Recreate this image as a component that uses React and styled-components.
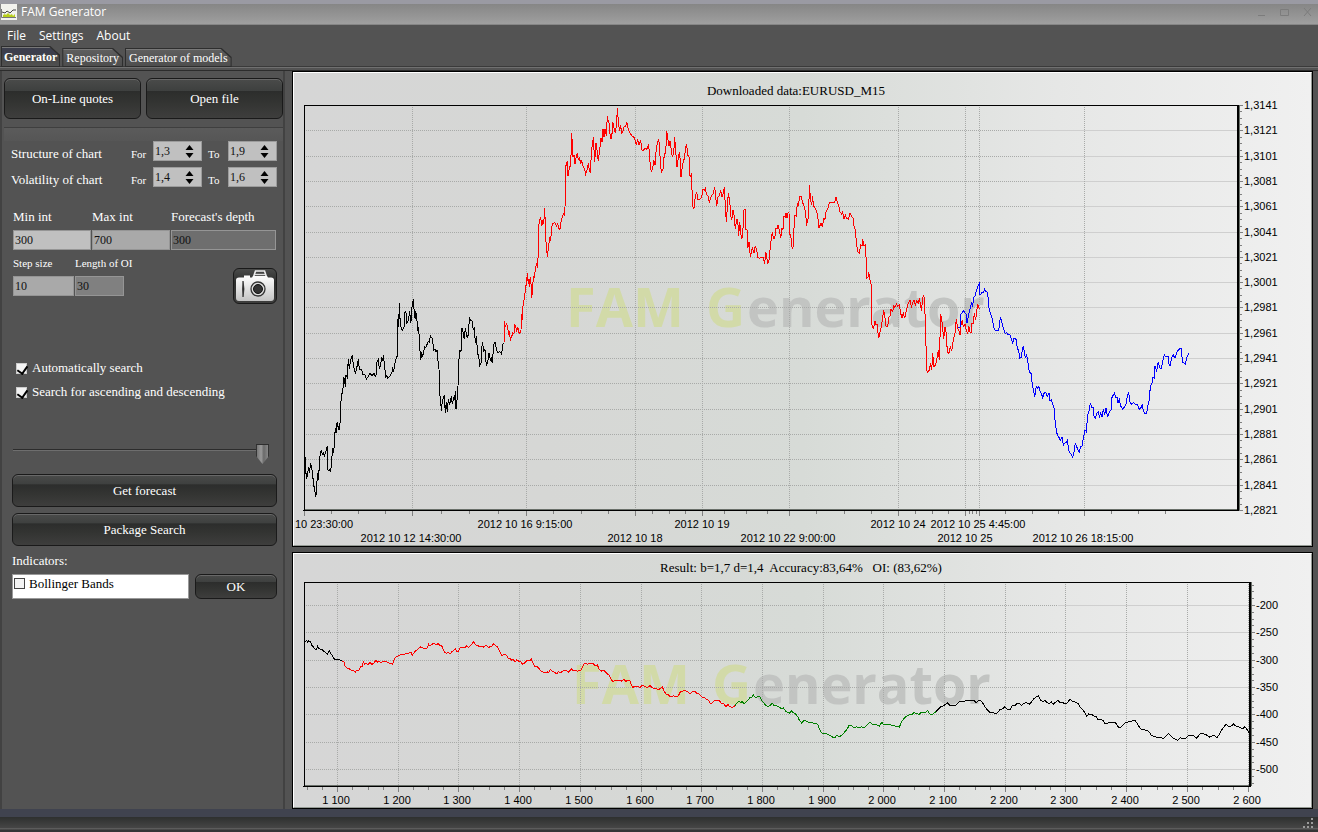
import React, {useState} from 'react'
import styled, {createGlobalStyle} from 'styled-components'

// samples are stored in thirds of a chart unit, counted from the origin of each run
const priceRuns = [
    {color: "#000", x: 290, y: 280, data: "45,530 47,575 50,592 53,585 55,560 58,580 62,548 65,570 68,572 70,618 73,618 77,652 80,630 82,580 85,600 88,560 91,515 94,512 97,522 100,518 103,528 106,518 109,510 112,497 113,570 117,572 119,568 122,574 125,540 128,505 131,520 134,470 136,445 138,460 140,430 143,428 145,450 148,448 151,420 154,342 158,340 161,290 164,300 166,322 168,285 172,292 175,236 178,268 181,245 187,224 190,255 196,280 200,265 205,238 208,268 215,268 219,285 224,283 229,297 234,290 240,280 246,287 252,280 256,288 259,284 261,245 265,238 268,265 271,260 275,230 278,242 280,224 284,262 287,290 290,287 293,295 300,288 306,275 308,262 311,275 314,252 320,230 323,228 324,118 326,140 328,68 331,135 337,152 343,138 345,95 348,98 351,130 355,122 359,92 362,130 364,118 366,80 370,58 373,100 376,118 377,92 381,122 384,152 386,140 388,185 392,240 395,222 398,228 404,200 408,202 414,185 418,186 421,168 427,175 431,210 435,207 438,215 441,210 443,235 447,268 449,340 452,362 454,392 457,362 460,355 463,345 466,400 469,365 472,396 475,358 479,375 484,348 487,372 491,355 494,358 496,332 498,388 501,360 504,318 506,245 510,210 513,215 516,145 520,160 523,178 526,145 530,165 532,175 536,158 538,110 542,122 546,122 550,150 553,140 556,190 559,168 563,222 566,228 569,257 573,250 577,185 581,212 585,208 589,258 593,248 597,218 601,240 604,235 607,248 611,195 615,185 620,210 624,218 630,215 635,222 638,192 641,190"},
    {color: "#f00", x: 500, y: 90, data: "12,760 13,693 16,710 20,702 23,712 26,735 28,722 31,750 35,740 38,728 42,730 44,705 47,708 50,725 53,710 57,728 60,730 63,720 65,672 67,690 70,632 74,628 76,590 79,585 82,550 85,582 87,568 89,590 92,560 95,625 98,595 100,560 103,562 107,530 110,520 113,535 115,480 116,405 119,392 122,380 125,408 128,395 131,402 134,355 138,455 142,500 146,465 149,445 152,452 155,410 159,400 165,398 169,408 173,402 177,418 181,415 184,390 188,378 192,370 194,378 195,350 197,230 202,212 204,258 208,235 212,225 215,128 219,200 222,195 225,222 229,198 232,188 235,210 238,200 242,222 245,212 249,228 253,235 257,253 261,240 265,220 268,240 272,250 274,175 277,170 280,142 284,215 288,160 291,180 295,213 299,180 303,145 306,155 309,118 312,140 315,118 319,137 322,78 325,95 328,100 331,145 335,147 338,95 342,115 346,128 350,100 352,55 356,105 359,122 362,105 365,132 369,122 373,108 377,110 380,95 385,118 390,128 396,138 402,142 406,152 409,165 413,148 417,165 422,150 425,178 429,183 434,175 440,178 446,163 449,208 454,246 458,235 461,210 465,225 469,175 475,150 478,158 481,215 484,246 490,235 493,190 497,192 500,122 504,150 507,168 510,152 514,180 517,200 521,190 524,142 528,195 531,230 536,195 539,185 543,262 547,232 551,208 554,210 556,172 560,165 563,195 567,200 569,255 573,262 575,250 577,345 580,355 583,353 586,318 590,308 594,330 600,328 605,322 608,298 613,300 616,295 620,315 624,318 628,338 634,318 640,310 644,292 647,320 650,348 654,320 658,318 662,300 666,322 670,308 673,292 676,345 679,397 682,355 685,310 689,330 692,375 695,390 699,360 703,380 706,418 710,388 713,390 716,438 719,395 724,445 728,440 731,360 735,358 738,420 741,418 743,475 747,455 751,500 757,475 762,488 766,468"},
    {color: "#f00", x: 740, y: 170, data: "46,228 50,238 53,262 58,265 64,262 70,262 74,283 77,245 80,262 83,280 86,278 90,240 94,205 97,185 100,205 104,205 108,175 111,178 114,165 118,180 122,205 126,175 129,178 132,138 136,142 138,130 141,145 144,128 147,128 148,192 152,195 157,238 160,228 162,175 165,135 169,138 172,100 175,105 179,80 184,80 188,98 192,108 196,125 200,162 203,155 206,130 208,45 212,90 215,105 218,78 220,108 224,112 230,125 235,150 237,175 243,158 247,172 251,145 255,148 258,125 263,118 268,98 276,96 284,98 288,82 292,95 296,108 300,125 305,132 308,125 311,148 316,135 320,145 325,148 330,130 335,140 340,145 341,165 346,180 349,215 353,245 358,250 362,225 366,228 368,208 372,228 376,225 378,260 380,325 384,320 386,305 390,330 394,345 396,465 400,478 405,452 408,465 411,462 416,505 420,485 424,470 427,450 431,420 434,435 438,468 443,470 447,440 450,438 453,418 458,425 461,408 465,412 469,402 473,408 478,405 482,430 486,445 490,430 494,445 497,430 501,415 505,400 510,390 514,410 518,398 522,390 526,405 530,392 535,400 538,388 541,398 544,422 547,400 550,375 553,385 556,450 560,600 562,608 568,600 572,580 575,600 578,550 582,590 587,585 591,565 595,540 598,570 602,432 606,455 611,508 615,470 619,490 622,545 627,550 631,530 635,542 640,510 645,490 649,448 653,475 658,485 660,495 663,465 667,450 670,470 675,462 679,480 683,492 686,468 690,485 693,490 696,460 700,460 703,430 707,450 710,425 713,403 718,418"},
    {color: "#00f", x: 940, y: 270, data: "55,173 60,172 61,135 66,130 70,122 75,128 78,132 81,158 85,140 89,120 92,112 94,98 98,108 101,82 105,78 109,62 114,48 118,40 120,75 126,68 130,68 134,57 138,65 141,65 144,80 146,112 150,125 156,145 160,162 163,178 168,182 173,182 176,180 180,150 182,142 186,160 190,175 195,190 200,188 205,195 209,192 213,205 218,218 222,205 228,208 232,235 236,242 239,265 244,262 247,240 250,228 253,245 256,262 260,255 264,280 268,305 273,310 276,335 280,360 284,380 289,350 293,355 297,350 300,362 304,370 308,383 313,368 318,368 322,380 327,370 329,392 334,390 338,402 343,418 345,450 348,475 352,495 356,500 361,512 366,502 370,525 374,520 378,518 382,512 385,530 388,548 394,552 398,562 402,545 406,518 410,530 414,540 418,545 422,530 426,528 430,505 435,480 439,485 443,435 448,420 451,398 455,412 460,412 462,438 466,445 471,430 475,425 478,440 482,428 486,440 490,420 494,432 498,415 503,442 508,425 513,420 515,385 518,378 523,370 527,382 531,382 534,400 538,388 542,408 548,417 554,410 558,402 562,378 566,368 570,395 574,403 580,398 586,402 592,402 597,418 602,415 607,402 610,422 615,432 620,430 624,405 628,390 631,350 636,340 639,322 643,325 645,288 650,302 655,275 658,290 663,298 668,275 673,255 678,260 684,258 686,280 690,288 695,262 700,255 705,265 710,248 715,240 722,234 725,240 727,278 732,278 736,283 740,262 743,258 746,248"},
]

const resultRuns = [
    {color: "#000", x: 290, y: 550, data: "45,276 50,272 53,278 56,273 62,276 65,285 70,290 75,297 80,298 83,289 87,296 95,298 100,303 105,305 112,313 118,303 122,310 128,318 132,326 137,330 143,328 150,330 155,333"},
    {color: "#f00", x: 290, y: 550, data: "155,333 162,335 165,347 170,354 178,356 185,362 190,362 196,367 200,361 206,361 212,350 217,349 220,336 224,342 228,339 234,344 240,338 246,343 252,339 258,330 263,337 268,334 273,340 278,334 285,335 292,336 300,340 308,343 312,330 318,320 325,318 332,313 340,314 348,310 356,310 362,306 367,315 372,308 378,302 385,296 392,290 400,295 406,294 411,295 416,283 420,289 426,283 432,280 437,284 445,281 450,288 455,287 460,300 465,308 470,310 475,307 480,313 485,305 490,303 496,296 500,303 505,303 510,294 518,292 525,294 530,287 535,292 541,288 547,280 552,275 556,284 562,286 570,291 575,288 580,292 588,285 595,292 602,290 607,288 611,280 616,287 622,289 626,298 632,310 637,318 643,312 650,317 655,326 660,325 665,330 670,328 675,336 680,330 687,334 692,335 698,343 705,338 712,330 720,332 724,328 728,338 735,350 742,350 748,356 753,364 760,367 767,368 772,365 776,369 781,358 787,363 795,368 801,371 805,365 812,368 820,362 828,360 834,367 840,362 845,357 850,362 858,360 862,364 868,362 873,360 880,345 885,340 892,343 900,339 908,340 915,347 922,345 928,358 935,364 942,361 950,370 957,375 963,388 970,395 976,390 983,393 990,390 996,394 1002,388 1008,394 1014,390 1020,393"},
    {color: "#f00", x: 630, y: 550, data: "0,393 3,402 8,412 16,409 25,410 30,412 38,405 45,410 52,412 60,407 68,414 76,414 85,419 92,415 97,411 103,424 108,432 113,432 118,438 125,441 130,437 136,439 145,438 150,427 156,424 164,422 172,424 180,431 187,426 195,423 200,430 208,432 215,441 222,442 228,448 235,450 240,460 246,459 252,452 260,450 268,452 275,461 282,462 288,470 294,464 300,470 308,472 315,467"},
    {color: "#008000", x: 630, y: 550, data: "315,467 320,460 326,455 332,457 337,455 342,462 348,455 355,450 360,442 365,443 370,435 376,443 383,440 390,440 396,452 402,460 408,466 414,470 420,466 427,460 433,467 440,468 447,471 453,475 460,474 466,482 472,487 478,490 485,483 490,488 497,492 503,500 508,510 515,519 521,512 528,513 535,517 543,516 550,519 557,519 564,525 568,538 575,548 582,552 590,551 598,555 605,560 614,564 620,556 628,560 636,555 645,545 651,538 658,525 665,528 672,533 680,530 687,533 695,530 702,533 709,528 715,522 720,517 726,522 733,522 740,524 748,528 755,517 760,522 767,525 775,523 783,525 790,526 800,530 808,531 815,515 822,505 830,498 838,494 846,494 852,488 860,490 867,494 874,487 880,488 887,487 893,482 898,490 904,495 912,490 917,485"},
    {color: "#000", x: 630, y: 550, data: "917,485 925,478 932,470 940,468 945,464 952,458 958,465 966,468 975,467 982,462 988,454 995,453 1002,455 1010,450 1014,452"},
    {color: "#000", x: 968, y: 550, data: "0,452 12,450 18,452 25,458 32,451 40,453 46,462 52,472 58,480 66,488 74,487 83,492 90,486 97,478 103,477 110,470 118,478 126,480 132,468 140,467 148,460 155,461 161,466 168,460 175,458 184,463 190,457 197,447 205,440 211,437 217,450 225,454 232,452 238,458 244,461 250,456 256,463 263,456 270,451 277,458 284,458 292,461 300,457 306,447 313,453 322,457 330,460 336,470 343,478 350,487 356,499 362,492 370,493 378,498 385,500 390,510 398,509 405,511 412,522 420,519 428,517 436,519 442,517 447,525 453,534 460,530 467,522 475,517 484,515 492,513 500,510 507,520 515,533 522,539 530,540 538,541 545,548 551,557 558,559 565,562 575,561 585,566 593,560 601,550 608,558 615,564 622,568 630,571 637,563 645,567 653,566 660,558 670,556 678,558 686,565 693,555 700,550 710,553 718,556 725,562 733,557 740,558 747,563 753,555 760,542 768,530 774,523 782,530 790,528 797,522 803,528 810,530 818,534 824,536 831,530 838,540 842,548 846,552"},
]

const priceChart = {
    id: "price",
    view: [294, 73, 1017, 472],
    plot: {left: 304, top: 105, right: 1238, bottom: 510},
    title: {text: "Downloaded data:EURUSD_M15", x: 796, y: 95},
    mark: {x: 566, y: 327},
    solidFrom: 1030,
    yTicks: ["1,3141", "1,3121", "1,3101", "1,3081", "1,3061", "1,3041", "1,3021", "1,3001", "1,2981", "1,2961", "1,2941", "1,2921", "1,2901", "1,2881", "1,2861", "1,2841", "1,2821"]
        .map((label, i) => ({label, at: Math.round(105 + i * 25.3)})),
    xTicks: [
        {at: 304, label: "10 23:30:00", x: 324, row: 0},
        {at: 412, label: "2012 10 12 14:30:00", x: 411, row: 1},
        {at: 526, label: "2012 10 16 9:15:00", x: 525, row: 0},
        {at: 635, label: "2012 10 18", x: 635, row: 1},
        {at: 702, label: "2012 10 19", x: 702, row: 0},
        {at: 789, label: "2012 10 22 9:00:00", x: 788, row: 1},
        {at: 898, label: "2012 10 24", x: 898, row: 0},
        {at: 965, label: "2012 10 25", x: 965, row: 1},
        {at: 979, label: "2012 10 25 4:45:00", x: 978, row: 0},
        {at: 1084, label: "2012 10 26 18:15:00", x: 1083, row: 1},
    ],
    minorX: [1111, 1138, 1165],
    minorY: [],
    runs: priceRuns,
}

const resultChart = {
    id: "result",
    view: [294, 554, 1017, 253],
    plot: {left: 304, top: 582, right: 1250, bottom: 786},
    title: {text: "Result: b=1,7 d=1,4\u00a0 Accuracy:83,64%\u00a0\u00a0 OI: (83,62%)", x: 801, y: 572},
    mark: {x: 572, y: 704},
    solidFrom: 1058,
    yTicks: [-200, -250, -300, -350, -400, -450, -500].map((label, i) => ({label, at: Math.round(605 + i * 27.3)})),
    xTicks: ["1 100", "1 200", "1 300", "1 400", "1 500", "1 600", "1 700", "1 800", "1 900", "2 000", "2 100", "2 200", "2 300", "2 400", "2 500", "2 600"]
        .map((label, i) => ({label, at: Math.round(337 + i * 60.7), x: Math.round(336 + i * 60.7), row: 0})),
    minorX: [307, 322],
    minorY: [585, 591, 598, 776, 783],
    runs: resultRuns,
}

const toPoints = ({x, y, data}) => data.split(" ").map((p) => {
    const [px, py] = p.split(",")
    return `${(x + px / 3).toFixed(1)},${(y + py / 3).toFixed(1)}`
}).join(" ")

// three small ticks between each pair of big ones
const between = (ticks) => ticks.slice(1).flatMap((t, i) => {
    const from = ticks[i].at
    return [1, 2, 3].map((k) => Math.round(from + (t.at - from) * k / 4))
})

function Chart({chart}) {
    const {id, view, plot, title, mark, solidFrom, yTicks, xTicks, runs} = chart
    const minorX = [...between(xTicks), ...chart.minorX]
    const minorY = [...between(yTicks), ...chart.minorY]
    return (
        <ChartPanel>
            <ChartSvg viewBox={view.join(" ")} role="img" aria-label={title.text}>
                <defs>
                    <linearGradient id={`${id}-bg`}>
                        <stop offset="0" stopColor="#d6d6d6" />
                        <stop offset="0.25" stopColor="#d6d7d5" />
                        <stop offset="0.5" stopColor="#d7dbd7" />
                        <stop offset="0.75" stopColor="#e6e7e6" />
                        <stop offset="1" stopColor="#f0f0f0" />
                    </linearGradient>
                </defs>
                <rect x={view[0]} y={view[1]} width={view[2]} height={view[3]} fill={`url(#${id}-bg)`} />
                <Watermark>
                    <text className="green" x={mark.x} y={mark.y}>FAM</text>
                    <text className="green" x={mark.x + 140} y={mark.y}>G</text>
                    <text x={mark.x + 181} y={mark.y}>enerator</text>
                </Watermark>
                <g shapeRendering="crispEdges" fill="none">
                    {yTicks.map(({at}) => (
                        <g key={at}>
                            <path d={`M${plot.left} ${at + 0.5}H${solidFrom}`} stroke="#a8aaa8" strokeDasharray="1 1" />
                            <path d={`M${solidFrom} ${at + 0.5}H${plot.right}`} stroke="#cfcfcf" />
                            <path d={`M${plot.right} ${at + 0.5}h5`} stroke="#808080" />
                        </g>
                    ))}
                    {xTicks.map(({at}) => (
                        <g key={at}>
                            <path d={`M${at + 0.5} ${plot.top}V${plot.bottom}`} stroke="#a8aaa8" strokeDasharray="1 1" />
                            <path d={`M${at + 0.5} ${plot.bottom}v6`} stroke="#808080" />
                        </g>
                    ))}
                    {minorX.map((x) => <path key={x} d={`M${x + 0.5} ${plot.bottom}v4`} stroke="#808080" />)}
                    {minorY.map((y) => <path key={y} d={`M${plot.right} ${y + 0.5}h4`} stroke="#808080" />)}
                    <path d={`M${plot.left} ${plot.bottom - 0.5}H${plot.right}M${plot.right + 1.5} ${plot.top}V${plot.bottom}`} stroke="#6a706a" />
                    <path d={`M${plot.left + 0.5} ${plot.bottom}V${plot.top + 0.5}H${plot.right}`} stroke="#000" />
                    <path d={`M${plot.right} ${plot.top}V${plot.bottom}`} stroke="#000" strokeWidth="2" />
                    <path d={`M${plot.left - 1} ${plot.bottom + 0.5}H${plot.right + 1}`} stroke="#000" />
                    {runs.map((run, i) => <polyline key={i} points={toPoints(run)} stroke={run.color} />)}
                </g>
                <ChartTitle x={title.x} y={title.y}>{title.text}</ChartTitle>
                {yTicks.map(({label, at}) => <AxisLabel key={label} x={plot.right + 6} y={at + 4}>{label}</AxisLabel>)}
                {xTicks.map(({label, x, row}) => <AxisLabel key={label} $center x={x} y={plot.bottom + 18 + row * 14}>{label}</AxisLabel>)}
            </ChartSvg>
        </ChartPanel>
    )
}

function Spin({label, start}) {
    const [value, setValue] = useState(start)
    const step = (d) => setValue((Number(value.replace(",", ".")) + d).toFixed(1).replace(".", ","))
    return (
        <SpinBox>
            <input aria-label={label} value={value} onChange={(e) => setValue(e.target.value)} />
            <div className="arrows">
                <button type="button" aria-label={`${label} up`} onClick={() => step(0.1)}>
                    <svg width="9" height="5"><path d="M0.5 5L4.5 0L8.5 5Z" /></svg>
                </button>
                <button type="button" aria-label={`${label} down`} onClick={() => step(-0.1)}>
                    <svg width="9" height="5"><path d="M0.5 0L4.5 5L8.5 0Z" /></svg>
                </button>
            </div>
        </SpinBox>
    )
}

function Field({id, label, start, bg, small}) {
    return (
        <FieldBox $small={small} $bg={bg}>
            <label htmlFor={id}>{label}</label>
            <input id={id} defaultValue={start} />
        </FieldBox>
    )
}

function Sidebar() {
    return (
        <Side>
            <TopButtons>
                <Button>On-Line quotes</Button>
                <Button>Open file</Button>
            </TopButtons>
            <Group>
                {[["Structure of chart", "1,3", "1,9"], ["Volatility of chart", "1,4", "1,6"]].map(([name, from, to]) => (
                    <SpinRow key={name}>
                        <span>{name}</span>
                        <small>For</small>
                        <Spin label={`${name} for`} start={from} />
                        <small className="to">To</small>
                        <Spin label={`${name} to`} start={to} />
                    </SpinRow>
                ))}
            </Group>
            <Fields $cols="78px 78px 105px">
                <Field id="min" label="Min int" start="300" bg="#c0c0c0" />
                <Field id="max" label="Max int" start="700" bg="#a9a9a9" />
                <Field id="depth" label="Forecast's depth" start="300" bg="#6e6e6e" />
            </Fields>
            <FieldsRow>
                <Fields $cols="61px 49px">
                    <Field small id="step" label="Step size" start="10" bg="#a9a9a9" />
                    <Field small id="length" label="Length of OI" start="30" bg="#808080" />
                </Fields>
                <CameraButton aria-label="Screenshot">
                    <svg width="40" height="34" viewBox="0 0 40 34">
                        <defs>
                            <linearGradient id="camera" x2="0" y2="1">
                                <stop offset="0" stopColor="#fff" />
                                <stop offset="1" stopColor="#c4c4c4" />
                            </linearGradient>
                        </defs>
                        <path d="M18.5 8L20.5 2H29.5L31.5 8" fill="none" stroke="#eee" strokeWidth="1.6" />
                        <path d="M20 5.5H30" stroke="#ddd" strokeWidth="1.4" />
                        <path d="M4 8.5H9V6.5H15V8.5H17L18 7H32L33 8.5H36Q39 8.5 39 11V29Q39 32 36 32H4Q1 32 1 29V11Q1 8.5 4 8.5Z" fill="url(#camera)" />
                        <path d="M8 12Q10 20 8 28Q7 20 8 12Z" fill="#222" stroke="#333" strokeWidth="0.8" />
                        <circle cx="23" cy="20" r="7" fill="#ddd" stroke="#333" strokeWidth="1.3" />
                        <circle cx="23" cy="20" r="4.5" fill="#333" stroke="#111" />
                    </svg>
                </CameraButton>
            </FieldsRow>
            <Checks>
                <CheckLabel><input type="checkbox" defaultChecked />Automatically search</CheckLabel>
                <CheckLabel><input type="checkbox" defaultChecked />Search for ascending and descending</CheckLabel>
            </Checks>
            <Slider type="range" aria-label="Search depth" defaultValue="100" />
            <Actions>
                <Button>Get forecast</Button>
                <Button>Package Search</Button>
            </Actions>
            <IndicatorTitle>Indicators:</IndicatorTitle>
            <IndicatorRow>
                <div className="list">
                    <CheckLabel $dark><input type="checkbox" />Bollinger Bands</CheckLabel>
                </div>
                <Button>OK</Button>
            </IndicatorRow>
        </Side>
    )
}

export default function App() {
    const [tab, setTab] = useState("Generator")
    return (
        <Window>
            <GlobalStyle />
            <TitleBar>
                <svg width="16" height="16" viewBox="0 0 16 16">
                    <path d="M0 0H16V16H0Z" fill="#f2f2ee" />
                    <path d="M2 13V11L4 10L5 11L7 9L9 11L11 10L12 12L14 10V13Z" fill="#b8cf1c" />
                    <path d="M0.5 5V13.5H15" fill="none" stroke="#777" />
                    <path d="M1 8L4 9L6 7L9 9L12 6L15 6" fill="none" stroke="#444" />
                </svg>
                <h1>FAM Generator</h1>
                <div className="controls">
                    <button aria-label="Minimize"><svg width="9" height="8"><path d="M1 7.5H8" /></svg></button>
                    <button aria-label="Maximize"><svg width="9" height="8"><path d="M0.5 1.5H8.5V7.5H0.5Z" /></svg></button>
                    <button aria-label="Close"><svg width="9" height="8"><path d="M1 0L8 8M8 0L1 8" /></svg></button>
                </div>
            </TitleBar>
            <Menu>
                <button>File</button>
                <button>Settings</button>
                <button>About</button>
            </Menu>
            <Tabs role="tablist">
                {["Generator", "Repository", "Generator of models"].map((name) => (
                    <Tab key={name} role="tab" aria-selected={tab === name} $active={tab === name} onClick={() => setTab(name)}>
                        <span>{name}</span>
                    </Tab>
                ))}
            </Tabs>
            <Main>
                <Sidebar />
                <Charts>
                    <Chart chart={priceChart} />
                    <Chart chart={resultChart} />
                </Charts>
            </Main>
            <StatusBar>
                <svg width="10" height="10" fill="#9a9a9a">
                    <path d="M8 0h2v2h-2zM4 4h2v2h-2zM8 4h2v2h-2zM0 8h2v2h-2zM4 8h2v2h-2zM8 8h2v2h-2z" />
                </svg>
            </StatusBar>
        </Window>
    )
}

const GlobalStyle = createGlobalStyle`
    * {
        box-sizing: border-box;
    }
    body {
        margin: 0;
        background: #535353;
        color: #fff;
        font: 13px/20px "Liberation Serif", serif;
    }
    button, input {
        font: inherit;
        color: inherit;
        margin: 0;
    }
`
const Window = styled.div`
    min-height: 100vh;
    display: flex;
    flex-direction: column;
`
const TitleBar = styled.header`
    display: flex;
    align-items: center;
    gap: 4px;
    height: 25px;
    padding: 0 6px 4px 1px;
    border-top: 4px solid #9a9aa3;
    border-bottom: 1px solid #868686;
    background: linear-gradient(#868686, #9f9f9f);
    h1 {
        margin: 0;
        font: 12px/18px "Open Sans", sans-serif;
    }
    .controls {
        display: flex;
        gap: 14px;
        margin-left: auto;
    }
    .controls button {
        display: flex;
        padding: 0;
        border: 0;
        background: none;
    }
    .controls path {
        fill: none;
        stroke: #7c7c7c;
    }
`
const Menu = styled.nav`
    display: flex;
    gap: 13px;
    padding: 0 7px;
    height: 21px;
    button {
        padding: 0;
        border: 0;
        background: none;
        font: 12px/18px "Open Sans", sans-serif;
    }
`
const Tabs = styled.div`
    display: flex;
    align-items: flex-end;
    gap: 2px;
    height: 25px;
    padding: 0 0 3px 1px;
    border-bottom: 1px solid #2c2c2c;
    background: linear-gradient(#3a3a3a, #3a3a3a) 0 20px / 100% 1px no-repeat, linear-gradient(#707070, #707070) 0 21px / 100% 1px no-repeat;
`
const Tab = styled.button`
    height: ${(p) => p.$active ? 21 : 19}px;
    padding: 1px;
    border: 0;
    background: #2e2e2e;
    clip-path: polygon(0 0, calc(100% - 10px) 0, 100% 9px, 100% 100%, 0 100%);
    font-size: 12px;
    font-weight: ${(p) => p.$active ? 700 : 400};
    line-height: ${(p) => p.$active ? 18 : 16}px;
    span {
        display: block;
        height: 100%;
        padding: 0 ${(p) => p.$active ? 2 : 3}px;
        border-top: 1px solid #787878;
        background: ${(p) => p.$active ? "linear-gradient(#3c3e4c 30%, #444 40%, #505050)" : "linear-gradient(#5e5e5e, #4e4e4e)"};
        clip-path: polygon(0 0, calc(100% - 10px) 0, 100% 9px, 100% 100%, 0 100%);
    }
`
const Main = styled.main`
    display: grid;
    grid-template-columns: 285px 1fr;
    gap: 7px;
    padding-right: 5px;
`
const Side = styled.aside`
    padding: 7px 0 0 2px;
    border: solid #424242;
    border-width: 0 2px;
`
const Button = styled.button`
    width: 100%;
    height: 33px;
    padding: 0;
    border: 1px solid #1a1a1a;
    border-radius: 6px;
    background: linear-gradient(#4a4b4a, #3e403f 30%, #2c2d2c 31%, #333432 60%, #3e3e3d);
    box-shadow: inset 0 1px #686868;
    font-size: 13px;
`
const TopButtons = styled.div`
    display: grid;
    grid-template-columns: 1fr 1fr;
    gap: 5px;
    ${Button} {
        height: 41px;
    }
`
const Group = styled.div`
    margin-top: 8px;
    padding: 13px 6px 14px 7px;
    border-top: 1px solid #3f3f3f;
    background: linear-gradient(#5b5b5b, #565656) 0 0 / 100% 13px no-repeat;
`
const SpinRow = styled.div`
    display: grid;
    grid-template-columns: 120px 22px 49px 26px 49px;
    align-items: center;
    height: 26px;
    small {
        font-size: 11px;
    }
    .to {
        padding-left: 6px;
    }
`
const SpinBox = styled.div`
    display: flex;
    align-self: start;
    height: 20px;
    border: 1px solid #9c9c9c;
    background: #c0c0c0;
    color: #111;
    input {
        width: 31px;
        padding: 0 0 1px 1px;
        border: 0;
        background: none;
        font-size: 12px;
        line-height: 16px;
        outline: none;
    }
    .arrows {
        display: flex;
        flex-direction: column;
        justify-content: center;
        gap: 3px;
    }
    button {
        display: flex;
        padding: 0;
        border: 0;
        background: none;
    }
`
const Fields = styled.div`
    display: grid;
    grid-template-columns: ${(p) => p.$cols};
    gap: 1px;
    padding-left: 9px;
`
const FieldBox = styled.div`
    label {
        display: block;
        margin-bottom: 3px;
        font-size: ${(p) => p.$small ? 11 : 13}px;
        white-space: nowrap;
    }
    input {
        display: block;
        width: 100%;
        height: 20px;
        padding: 0 1px 1px;
        border: 1px solid #959595;
        background: ${(p) => p.$bg};
        color: #111;
        font-size: 12px;
    }
`
const FieldsRow = styled.div`
    display: flex;
    justify-content: space-between;
    align-items: flex-end;
    height: 54px;
    padding: 0 6px 0 0;
    ${Fields} {
        align-self: flex-start;
        margin-top: 3px;
    }
`
const CameraButton = styled.button`
    display: flex;
    width: 44px;
    height: 36px;
    padding: 0 1px;
    border: 1px solid #1a1a1a;
    border-radius: 6px;
    background: linear-gradient(#4a4b4a, #2c2d2c 40%, #3e3e3d);
`
const Checks = styled.div`
    display: flex;
    flex-direction: column;
    gap: 4px;
    margin-top: 54px;
    padding-left: 12px;
`
const CheckLabel = styled.label`
    display: flex;
    align-items: center;
    gap: ${(p) => p.$dark ? 4 : 5}px;
    color: ${(p) => p.$dark ? "#000" : "#fff"};
    input {
        appearance: none;
        width: 11px;
        height: 11px;
        border: 1px solid ${(p) => p.$dark ? "#444" : "#ccc"};
        background: #f4f4f4;
    }
    input:checked::after {
        content: "";
        display: block;
        width: 5px;
        height: 8px;
        margin-left: 2px;
        border: solid #000;
        border-width: 0 2px 2px 0;
        transform: rotate(35deg);
    }
`
const Slider = styled.input`
    appearance: none;
    display: block;
    width: 256px;
    height: 22px;
    margin: 41px 0 0 9px;
    background: linear-gradient(#2c2c2c 50%, #6e6e6e 50%) 0 6px / 100% 2px no-repeat;
    &::-webkit-slider-thumb {
        appearance: none;
        width: 13px;
        height: 20px;
        background: linear-gradient(90deg, #333 1px, #777 1px, #999 40%, #6a6a6a 60%, #888 12px, #333 12px);
        border-top: 1px solid #2e2e2e;
        clip-path: polygon(0 0, 100% 0, 100% 60%, 50% 100%, 0 60%);
    }
`
const Actions = styled.div`
    display: grid;
    gap: 6px;
    margin-top: 9px;
    padding: 0 6px 0 8px;
`
const IndicatorTitle = styled.div`
    margin-top: 5px;
    padding-left: 8px;
`
const IndicatorRow = styled.div`
    display: grid;
    grid-template-columns: 177px 1fr;
    gap: 6px;
    margin-top: 3px;
    padding: 0 6px 0 8px;
    .list {
        padding: 0 1px;
        border: 1px solid #999;
        background: #fff;
    }
    ${CheckLabel} {
        height: 17px;
    }
    ${Button} {
        height: 25px;
    }
`
const Charts = styled.section`
    display: grid;
    align-content: start;
    gap: 5px;
`
const ChartPanel = styled.div`
    border: 1px solid #000;
`
const ChartSvg = styled.svg`
    display: block;
    width: 100%;
    border: 1px solid #fff;
    border-right-color: #949a94;
    border-bottom-color: #949a94;
`
const Watermark = styled.g`
    font: 700 54px "Open Sans", sans-serif;
    fill: #c2c4c2;
    .green {
        fill: #d2daa8;
    }
`
const ChartTitle = styled.text`
    font: 13px "Liberation Serif", serif;
    text-anchor: middle;
`
const AxisLabel = styled.text`
    font: 11px "Liberation Sans", sans-serif;
    text-anchor: ${(p) => p.$center ? "middle" : "start"};
`
const StatusBar = styled.footer`
    flex: 1;
    display: flex;
    align-items: flex-start;
    justify-content: flex-end;
    min-height: 23px;
    padding: 9px 5px 0;
    background: linear-gradient(#40434f 8px, #2e302f 8px, #464646 19px, #5c5c5c 19px, #5c5c5c 20px, #353535 21px);
`
